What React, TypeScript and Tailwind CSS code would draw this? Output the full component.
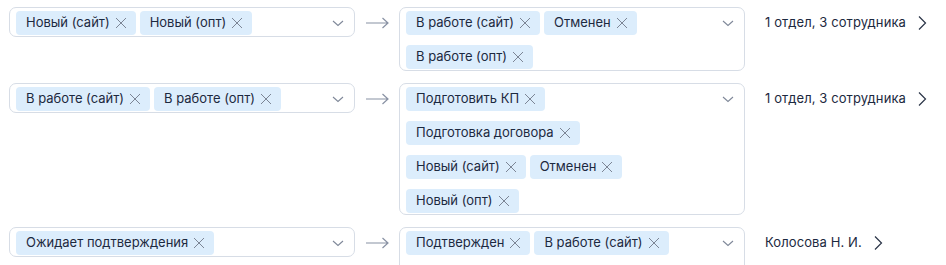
import React from 'react';

type Rule = {
  from: string[];
  to: string[][];
  target: string;
};

// right-hand rows are broken by hand so the wrap matches the design
const rules: Rule[] = [
  {
    from: ['Новый (сайт)', 'Новый (опт)'],
    to: [['В работе (сайт)', 'Отменен'], ['В работе (опт)']],
    target: '1 отдел, 3 сотрудника',
  },
  {
    from: ['В работе (сайт)', 'В работе (опт)'],
    to: [['Подготовить КП'], ['Подготовка договора'], ['Новый (сайт)', 'Отменен'], ['Новый (опт)']],
    target: '1 отдел, 3 сотрудника',
  },
  {
    from: ['Ожидает подтверждения'],
    to: [['Подтвержден', 'В работе (сайт)'], ['Новый (сайт)']],
    target: 'Колосова Н. И.',
  },
];

const Chip: React.FC<{ label: string }> = ({ label }) => (
  <span className="flex h-6 items-center gap-[5px] rounded-[4px] bg-[#dcedfc] pl-[10px] pr-[9px] text-[13px] text-[#1c2940]">
    {label}
    <svg width="12" height="12" viewBox="0 0 12 12" className="shrink-0">
      <path d="M1 1 L11 11 M11 1 L1 11" stroke="#7c8595" strokeWidth="1" fill="none" />
    </svg>
  </span>
);

const Chevron = () => (
  <div className="flex h-6 w-4 items-center justify-center">
    <svg width="12" height="7" viewBox="0 0 12 7">
      <path d="M1 1 L6 5.5 L11 1" stroke="#7f8899" strokeWidth="1.1" fill="none" />
    </svg>
  </div>
);

const SelectBox: React.FC<{ rows: string[][] }> = ({ rows }) => (
  <div className="flex w-[346px] rounded-[7px] border border-[#d7dde6] bg-white pb-[1px] pl-[6px] pr-[8px] pt-[3px]">
    <div className="flex flex-1 flex-col gap-y-[10px]">
      {rows.map((r, i) => (
        <div key={i} className="flex gap-x-[4px]">
          {r.map((it, j) => (
            <Chip key={j} label={it} />
          ))}
        </div>
      ))}
    </div>
    <Chevron />
  </div>
);

export default function App() {
  return (
    <div
      className="flex h-[265px] w-[946px] flex-col gap-[12px] overflow-hidden bg-white pl-[9px] pt-[7px]"
      style={{ fontFamily: 'Inter, "Noto Sans", sans-serif' }}
    >
      {rules.map((r, i) => (
        <div key={i} className="flex items-start">
          <SelectBox rows={[r.from]} />
          <div className="flex h-[31px] w-[44px] items-center justify-center">
            <svg width="24" height="12" viewBox="0 0 24 12">
              <path d="M1 6 H23 M17.5 1 L23 6 L17.5 11" stroke="#8891a3" strokeWidth="1.2" fill="none" />
            </svg>
          </div>
          <SelectBox rows={r.to} />
          <div className="ml-[20px] mt-[4px] flex h-6 items-center gap-[11px] text-[13px] tracking-[0.1px] text-[#1c2940]">
            <span>{r.target}</span>
            <svg width="10" height="16" viewBox="0 0 10 16">
              <path d="M2 1.5 L8.5 8 L2 14.5" stroke="#2a3447" strokeWidth="1.2" fill="none" />
            </svg>
          </div>
        </div>
      ))}
    </div>
  );
}
